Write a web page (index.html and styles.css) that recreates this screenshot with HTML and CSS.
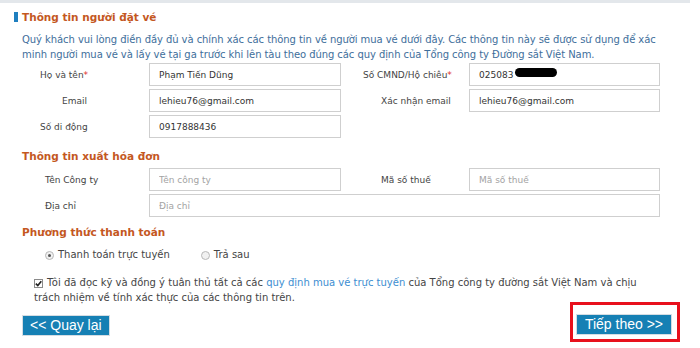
FILE: index.html
```html
<!DOCTYPE html>
<html lang="vi">
<head>
<meta charset="utf-8">
<title>Thông tin người đặt vé</title>
<link rel="stylesheet" href="styles.css">
</head>
<body>
<div class="page">
  <div class="topline"></div>

  <h2 class="heading first"><span class="bar"></span>Thông tin người đặt vé</h2>
  <p class="intro">Quý khách vui lòng điền đầy đủ và chính xác các thông tin về người mua vé dưới đây. Các thông tin này sẽ được sử dụng để xác minh người mua vé và lấy vé tại ga trước khi lên tàu theo đúng các quy định của Tổng công ty Đường sắt Việt Nam.</p>

  <div class="grid">
    <label class="lbl l1">Họ và tên<span class="req">*</span></label>
    <input class="field" type="text" value="Phạm Tiến Dũng">
    <label class="lbl r1">Số CMND/Hộ chiêu<span class="req">*</span></label>
    <div class="redact-wrap">
      <input class="field" type="text" value="025083">
      <span class="redact"></span>
    </div>

    <label class="lbl l2">Email</label>
    <input class="field" type="text" value="lehieu76@gmail.com">
    <label class="lbl r2">Xác nhận email</label>
    <input class="field" type="text" value="lehieu76@gmail.com">

    <label class="lbl l1">Số di động</label>
    <input class="field" type="text" value="0917888436">
  </div>

  <h2 class="heading second">Thông tin xuất hóa đơn</h2>
  <div class="grid">
    <label class="lbl l3">Tên Công ty</label>
    <input class="field" type="text" placeholder="Tên công ty">
    <label class="lbl r2">Mã số thuế</label>
    <input class="field" type="text" placeholder="Mã số thuế">

    <label class="lbl l3">Địa chỉ</label>
    <input class="field wide" type="text" placeholder="Địa chỉ">
  </div>

  <h2 class="heading third">Phương thức thanh toán</h2>
  <div class="radios">
    <span class="radio-item"><span class="radio checked"></span>Thanh toán trực tuyến</span>
    <span class="radio-item second-radio"><span class="radio"></span>Trả sau</span>
  </div>

  <p class="agree"><span class="check"><svg width="7" height="7" viewBox="0 0 7 7"><path d="M0.8 3.6 L2.8 5.6 L6.3 1.2" fill="none" stroke="#222" stroke-width="1.6"/></svg></span>Tôi đã đọc kỹ và đồng ý tuân thủ tất cả các <a href="#" class="link">quy định mua vé trực tuyến</a> của Tổng công ty đường sắt Việt Nam và chịu trách nhiệm về tính xác thực của các thông tin trên.</p>

  <div class="actions">
    <button class="btn" type="button">&lt;&lt; Quay lại</button>
    <div class="highlight">
      <button class="btn" type="button">Tiếp theo &gt;&gt;</button>
    </div>
  </div>
</div>
</body>
</html>
```
FILE: styles.css
```css
html, body {
  margin: 0;
  padding: 0;
  background: #ffffff;
}

.page {
  width: 700px;
  height: 348px;
  overflow: hidden;
  font-family: "DejaVu Sans", Verdana, sans-serif;
  font-size: 9px;
  color: #444;
}

.topline {
  width: 690px;
  height: 3px;
  background: #e3e7eb;
}

.heading {
  margin: 0;
  padding-left: 22px;
  font-size: 10.5px;
  font-weight: bold;
  color: #c4581f;
  line-height: 14px;
  display: flex;
  align-items: center;
}

.heading.first {
  margin-top: 7px;
  padding-left: 14px;
}

.bar {
  display: inline-block;
  width: 4px;
  height: 10px;
  background: #1f7fbf;
  margin-right: 4px;
}

.heading.second {
  margin-top: 11px;
}

.heading.third {
  margin-top: 8px;
}

.intro {
  margin: 8px 0 0 0;
  padding-left: 22px;
  width: 660px;
  font-size: 10px;
  letter-spacing: -0.07px;
  line-height: 15px;
  color: #3e6e9b;
}

.grid {
  display: grid;
  grid-template-columns: 149px 192px 128px 191px;
  grid-auto-rows: 23px;
  row-gap: 3px;
  margin-top: 1px;
  align-items: center;
}

.heading.second + .grid {
  margin-top: 5px;
}

.lbl {
  font-size: 9px;
  color: #444;
}

.l1 { padding-left: 40px; }
.l2 { padding-left: 62px; }
.l3 { padding-left: 45px; }
.r1 { padding-left: 22px; }
.r2 { padding-left: 40px; }

.req {
  color: #e0302a;
}

.field {
  box-sizing: border-box;
  width: 100%;
  height: 23px;
  margin: 0;
  border: 1px solid #cfcfcf;
  padding: 0 0 0 9px;
  font-family: "DejaVu Sans", Verdana, sans-serif;
  font-size: 9px;
  color: #333;
  background: #fff;
  outline: none;
}

.field::placeholder {
  color: #a3a3a3;
}

.field.wide {
  grid-column: 2 / 5;
}

.redact-wrap {
  position: relative;
  height: 23px;
}

.redact {
  position: absolute;
  left: 46px;
  top: 5px;
  width: 42px;
  height: 9px;
  background: #000;
  border-radius: 5px;
}

.radios {
  display: flex;
  align-items: center;
  margin-top: 9px;
  padding-left: 45px;
  font-size: 10px;
  color: #444;
  line-height: 14px;
}

.radio-item {
  display: inline-flex;
  align-items: center;
}

.second-radio {
  margin-left: 31px;
}

.radio {
  box-sizing: border-box;
  width: 9px;
  height: 9px;
  border-radius: 50%;
  border: 1px solid #b8b8b8;
  background: #f1f1f1;
  margin-right: 4px;
  position: relative;
}

.radio.checked::after {
  content: "";
  position: absolute;
  left: 2px;
  top: 2px;
  width: 3px;
  height: 3px;
  border-radius: 50%;
  background: #555;
}

.agree {
  margin: 13px 0 0 0;
  padding-left: 34px;
  width: 620px;
  font-size: 10px;
  line-height: 15px;
  color: #444;
}

.check {
  display: inline-flex;
  align-items: center;
  justify-content: center;
  box-sizing: border-box;
  width: 9px;
  height: 9px;
  border: 1px solid #8a8a8a;
  background: #fff;
  margin-right: 4px;
  vertical-align: -1px;
}

.link {
  color: #3d8ed1;
  text-decoration: none;
}

.actions {
  display: flex;
  justify-content: space-between;
  align-items: flex-start;
  width: 657px;
  padding-left: 23px;
  margin-top: -3px;
}

.btn {
  font-family: "Liberation Sans", Arial, sans-serif;
  font-size: 14px;
  color: #fff;
  background: #1680b4;
  border: none;
  box-shadow: 0 0 0 1px #d5dde3;
  height: 19px;
  line-height: 19px;
  padding: 0 7px;
  margin-top: 14px;
  cursor: pointer;
}

.highlight {
  border: 3px solid #e8101c;
  padding: 0 6px 5px 4px;
}

.highlight .btn {
  margin-top: 10px;
  padding: 0 8px;
}
```
